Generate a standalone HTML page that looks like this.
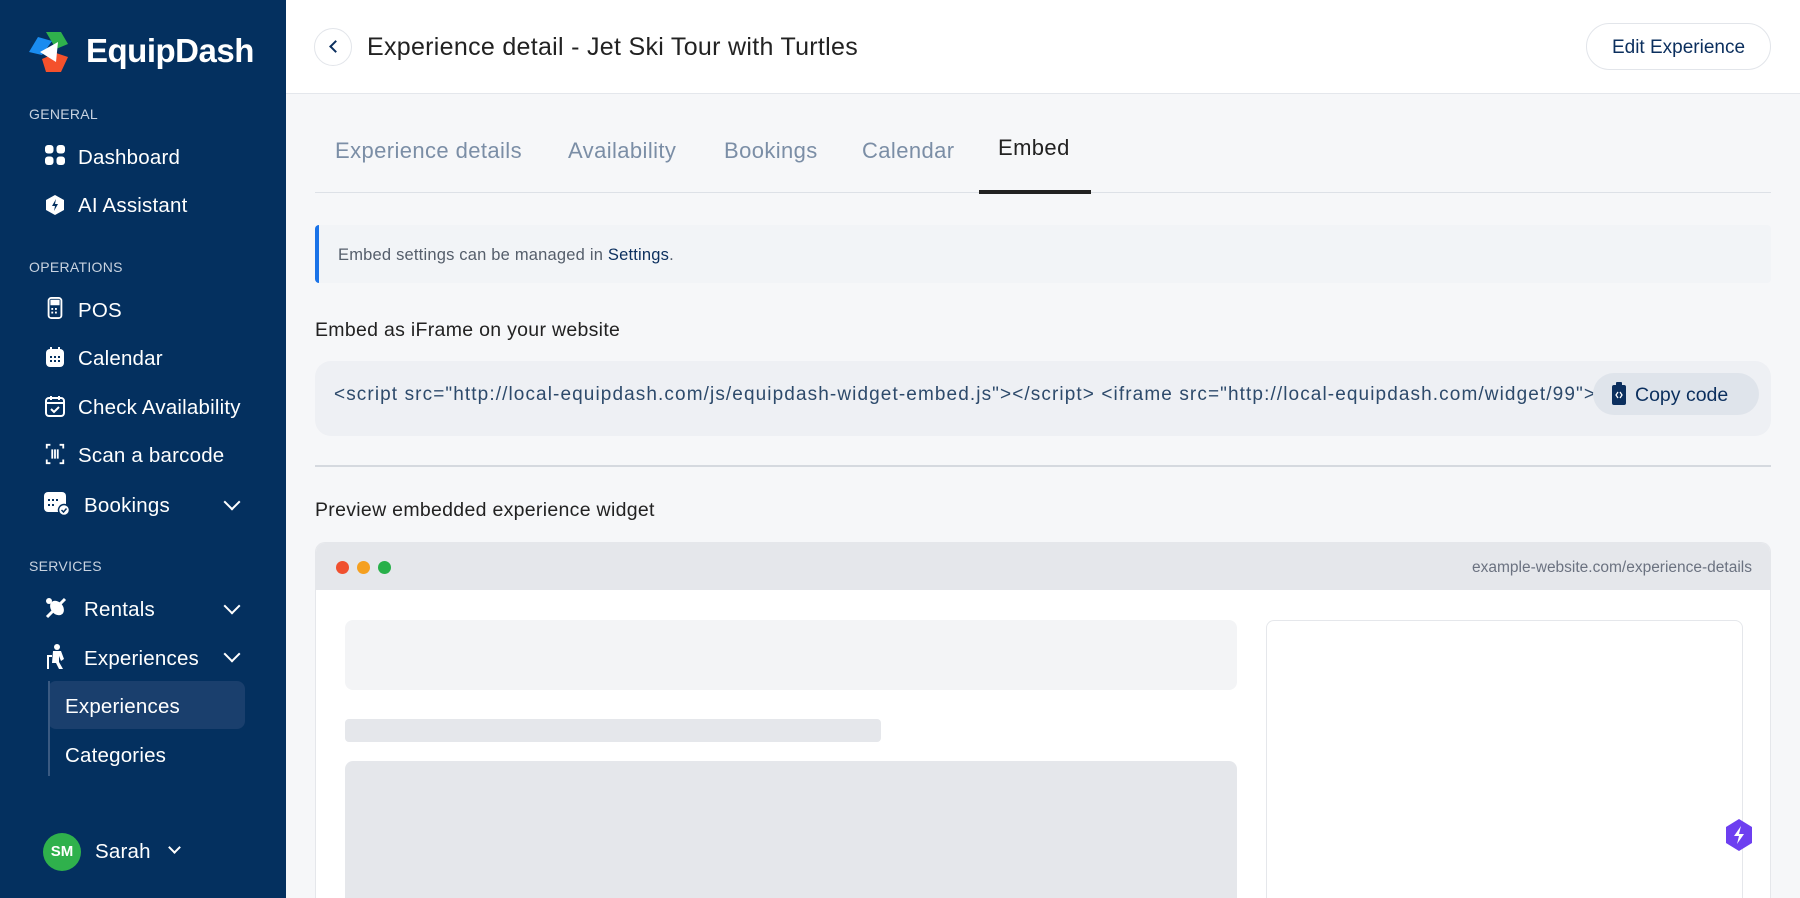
<!DOCTYPE html>
<html><head><meta charset="utf-8"><style>
*{box-sizing:border-box;margin:0;padding:0}
html{overflow:hidden;height:898px}
body{width:1800px;height:898px;overflow:hidden;font-family:"Liberation Sans",sans-serif;background:#f6f7f9;position:relative}
.sb{position:absolute;left:0;top:0;width:286px;height:898px;background:#04305f;color:#fff}
.abs{position:absolute}
.sec{position:absolute;left:29px;font-size:14px;color:#c9d3e0;letter-spacing:.3px}
.it{position:absolute;left:78px;font-size:20.5px;color:#fff;line-height:24px;letter-spacing:.2px}
.ic{position:absolute;left:44px;width:22px;height:22px}
.chev{position:absolute;left:226px;width:12px;height:12px;border-right:2px solid #fff;border-bottom:2px solid #fff;transform:rotate(45deg)}
.tab{position:absolute;top:138px;font-size:22px;color:#7b8ea6;letter-spacing:.4px}
</style></head><body>
<div class="sb">
  <svg class="abs" style="left:28px;top:31px" width="44" height="42" viewBox="0 0 44 42">
    <polygon points="18,1 33,1 40,13 28,18" fill="#2fb14c"/>
    <polygon points="1,21 10,6 24,10 14,24" fill="#1a8cf0"/>
    <polygon points="14,28 28,22 40,26 33,41 18,41" fill="#f4512c"/>
    <polygon points="12,21 30,11 28,31" fill="#fff"/>
  </svg>
  <div class="abs" style="left:86px;top:32px;font-size:33px;font-weight:bold;letter-spacing:-0.5px">EquipDash</div>
  <div class="sec" style="top:106px">GENERAL</div>
  <svg class="ic" style="top:144px" viewBox="0 0 22 22" fill="#fff"><rect x="1" y="1" width="8.5" height="8.5" rx="3"/><rect x="12.5" y="1" width="8.5" height="8.5" rx="3"/><rect x="1" y="12.5" width="8.5" height="8.5" rx="3"/><rect x="12.5" y="12.5" width="8.5" height="8.5" rx="3"/></svg>
  <div class="it" style="top:146px">Dashboard</div>
  <svg class="ic" style="top:194px" viewBox="0 0 22 22"><polygon points="11,1 20,6 20,16 11,21 2,16 2,6" fill="#fff"/><path d="M12 5 L8 12 H11 L10 17 L14 10 H11 Z" fill="#04305f"/></svg>
  <div class="it" style="top:194px">AI Assistant</div>
  <div class="sec" style="top:259px">OPERATIONS</div>
  <svg class="ic" style="top:297px" viewBox="0 0 22 24" fill="none" stroke="#fff" stroke-width="2"><rect x="4" y="1" width="14" height="22" rx="3"/><rect x="7" y="4" width="8" height="4" fill="#fff"/><path d="M7 13h2M11 13h2M15 13h0M7 17h2M11 17h2"/></svg>
  <div class="it" style="top:299px">POS</div>
  <svg class="ic" style="top:346px" viewBox="0 0 22 22"><rect x="2" y="3" width="18" height="18" rx="4" fill="#fff"/><path d="M7 1v4M15 1v4" stroke="#fff" stroke-width="2"/><g fill="#04305f"><rect x="6" y="10" width="2" height="2"/><rect x="10" y="10" width="2" height="2"/><rect x="14" y="10" width="2" height="2"/><rect x="6" y="14" width="2" height="2"/><rect x="10" y="14" width="2" height="2"/><rect x="14" y="14" width="2" height="2"/></g></svg>
  <div class="it" style="top:347px">Calendar</div>
  <svg class="ic" style="top:395px" viewBox="0 0 22 22" fill="none" stroke="#fff" stroke-width="2"><rect x="2" y="3" width="18" height="18" rx="3"/><path d="M2 8h18M7 1v4M15 1v4M7 14l3 3 5-5"/></svg>
  <div class="it" style="top:396px">Check Availability</div>
  <svg class="ic" style="top:443px" viewBox="0 0 22 24" fill="none" stroke="#fff" stroke-width="2"><path d="M2 6V2h4M16 2h4v4M2 18v4h4M16 22h4v-4M8 7v10M11 7v10M14 7v10"/></svg>
  <div class="it" style="top:444px">Scan a barcode</div>
  <svg class="abs" style="left:43px;top:490px" width="28" height="26" viewBox="0 0 28 26"><rect x="1" y="2" width="22" height="20" rx="4" fill="#fff"/><g fill="#04305f"><rect x="5" y="9" width="2" height="2"/><rect x="9" y="9" width="2" height="2"/><rect x="13" y="9" width="2" height="2"/><rect x="5" y="14" width="2" height="2"/><rect x="9" y="14" width="2" height="2"/></g><circle cx="21" cy="20" r="5.5" fill="#fff" stroke="#04305f" stroke-width="1.5"/><path d="M18.5 20l2 2 3-3.5" stroke="#04305f" stroke-width="1.5" fill="none"/></svg>
  <div class="it" style="top:494px;left:84px">Bookings</div>
  <div class="chev" style="top:496px"></div>
  <div class="sec" style="top:558px">SERVICES</div>
  <svg class="ic" style="top:596px;width:24px;height:24px" viewBox="0 0 24 24"><ellipse cx="13" cy="12" rx="6" ry="8" transform="rotate(-40 13 12)" fill="#fff"/><path d="M3 21L21 3" stroke="#fff" stroke-width="3"/><circle cx="5" cy="5" r="3" fill="#fff"/></svg>
  <div class="it" style="top:598px;left:84px">Rentals</div>
  <div class="chev" style="top:600px"></div>
  <svg class="ic" style="top:644px;width:24px;height:26px" viewBox="0 0 24 26" fill="#fff"><circle cx="13" cy="3" r="3"/><path d="M9 7h8l3 8-3 2-2-5v6l4 7h-4l-3-6h-4z"/><path d="M3 11h5v2H5v12H3z"/></svg>
  <div class="it" style="top:647px;left:84px">Experiences</div>
  <div class="chev" style="top:648px"></div>
  <div class="abs" style="left:48px;top:681px;width:197px;height:48px;background:#1a3f6d;border-radius:8px"></div>
  <div class="abs" style="left:48px;top:681px;width:2px;height:95px;background:#3a5a82"></div>
  <div class="it" style="top:695px;left:65px">Experiences</div>
  <div class="it" style="top:744px;left:65px">Categories</div>
  <div class="abs" style="left:43px;top:833px;width:38px;height:38px;border-radius:50%;background:#2fb14c;font-size:15px;font-weight:bold;text-align:center;line-height:38px">SM</div>
  <div class="it" style="top:840px;left:95px">Sarah</div>
  <div class="chev" style="top:843px;left:170px;width:9px;height:9px"></div>
</div>
<div class="abs" style="left:286px;top:0;width:1514px;height:94px;background:#fff;border-bottom:1px solid #e4e7ec"></div>
<div class="abs" style="left:314px;top:28px;width:38px;height:38px;border-radius:50%;border:1px solid #e2e5ea;background:#fff"></div>
<div class="abs" style="left:331px;top:42px;width:9px;height:9px;border-left:2px solid #0b2f5e;border-bottom:2px solid #0b2f5e;transform:rotate(45deg)"></div>
<div class="abs" style="left:367px;top:33px;font-size:25px;color:#222;letter-spacing:.3px">Experience detail - Jet Ski Tour with Turtles</div>
<div class="abs" style="left:1586px;top:23px;width:185px;height:47px;border:1px solid #e2e5ea;border-radius:24px;background:#fff;font-size:19px;color:#0b2f5e;text-align:center;line-height:47px">Edit Experience</div>
<div class="tab" style="left:335px">Experience details</div>
<div class="tab" style="left:568px">Availability</div>
<div class="tab" style="left:724px">Bookings</div>
<div class="tab" style="left:862px">Calendar</div>
<div class="tab" style="left:998px;top:135px;color:#222">Embed</div>
<div class="abs" style="left:315px;top:192px;width:1456px;height:1px;background:#dde1e7"></div>
<div class="abs" style="left:979px;top:190px;width:112px;height:4px;background:#222"></div>
<div class="abs" style="left:315px;top:225px;width:1456px;height:58px;background:#f2f4f7;border-left:4px solid #1a73e8;border-radius:4px"></div>
<div class="abs" style="left:338px;top:246px;font-size:16.5px;color:#555e6b;letter-spacing:.2px">Embed settings can be managed in <span style="color:#0b2f5e">Settings</span>.</div>
<div class="abs" style="left:315px;top:319px;font-size:19.5px;color:#222;letter-spacing:.3px">Embed as iFrame on your website</div>
<div class="abs" style="left:315px;top:361px;width:1456px;height:75px;background:#eef0f4;border-radius:16px;overflow:hidden">
  <div class="abs" style="left:19px;top:23px;font-size:19px;letter-spacing:1.1px;color:#2d4a6b;white-space:nowrap;width:1275px;overflow:hidden">&lt;script src="http://local-equipdash.com/js/equipdash-widget-embed.js"&gt;&lt;/script&gt; &lt;iframe src="http://local-equipdash.com/widget/99"&gt;</div>
  <div class="abs" style="left:1278px;top:12px;width:166px;height:42px;border-radius:21px;background:#dfe4eb"></div>
  <svg class="abs" style="left:1296px;top:21px" width="16" height="24" viewBox="0 0 16 24"><rect x="1" y="3" width="14" height="20" rx="2" fill="#0b2f5e"/><rect x="5" y="0" width="6" height="5" rx="1" fill="#0b2f5e"/><path d="M7 10l-2 3 2 3M9 10l2 3-2 3" stroke="#fff" stroke-width="1.3" fill="none"/></svg>
  <div class="abs" style="left:1320px;top:23px;font-size:19.5px;color:#0b2f5e">Copy code</div>
</div>
<div class="abs" style="left:315px;top:465px;width:1456px;height:2px;background:#d5d9df"></div>
<div class="abs" style="left:315px;top:499px;font-size:19.5px;color:#222;letter-spacing:.3px">Preview embedded experience widget</div>
<div class="abs" style="left:315px;top:542px;width:1456px;height:356px;background:#fff;border:1px solid #e5e7eb;border-bottom:none;border-radius:10px 10px 0 0;overflow:hidden">
  <div class="abs" style="left:0;top:0;width:1456px;height:47px;background:#e5e7eb"></div>
  <div class="abs" style="left:20px;top:18px;width:13px;height:13px;border-radius:50%;background:#f0502f"></div>
  <div class="abs" style="left:41px;top:18px;width:13px;height:13px;border-radius:50%;background:#f5a020"></div>
  <div class="abs" style="left:62px;top:18px;width:13px;height:13px;border-radius:50%;background:#28b04a"></div>
  <div class="abs" style="right:18px;top:16px;font-size:15.5px;color:#6b7280">example-website.com/experience-details</div>
  <div class="abs" style="left:29px;top:77px;width:892px;height:70px;background:#f3f4f6;border-radius:8px"></div>
  <div class="abs" style="left:29px;top:176px;width:536px;height:23px;background:#e5e7eb;border-radius:4px"></div>
  <div class="abs" style="left:29px;top:218px;width:892px;height:160px;background:#e5e7eb;border-radius:8px"></div>
  <div class="abs" style="left:950px;top:77px;width:477px;height:300px;border:1px solid #e5e7eb;border-radius:8px"></div>
</div>
<svg class="abs" style="left:1724px;top:818px" width="30" height="34" viewBox="0 0 30 34"><polygon points="15,1 28,9 28,25 15,33 2,25 2,9" fill="#6d3ff0"/><path d="M17 8L10 18h5l-2 8 7-10h-5z" fill="#fff"/></svg>
</body></html>
